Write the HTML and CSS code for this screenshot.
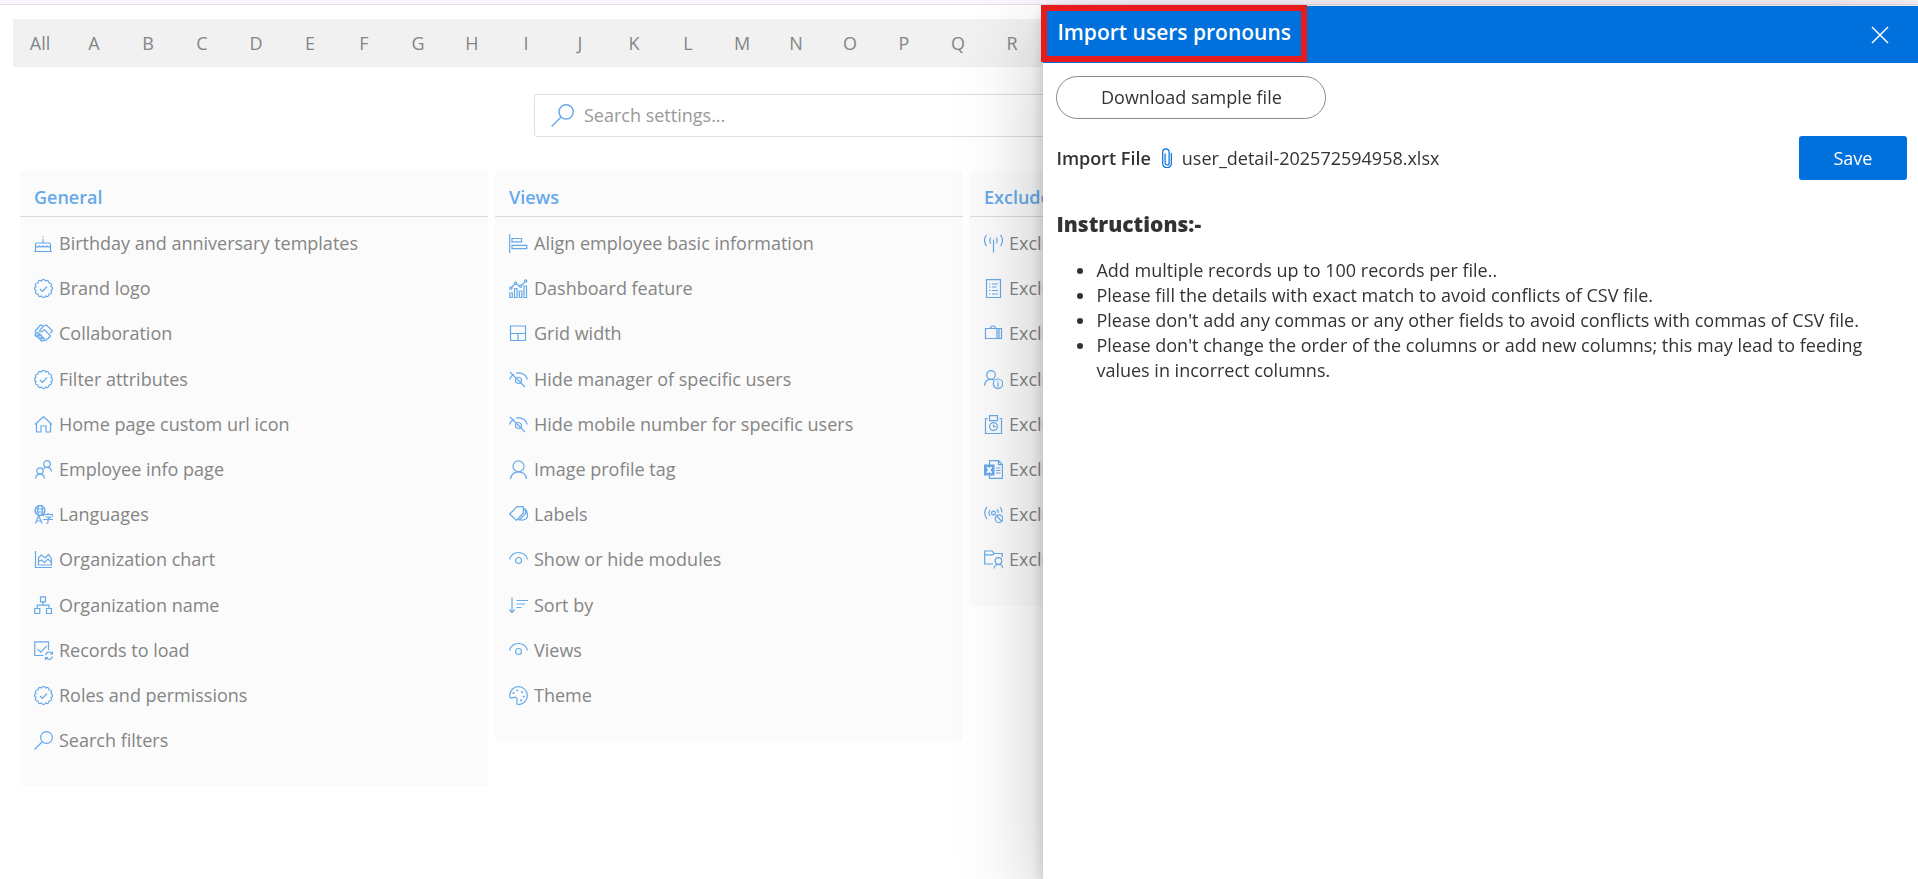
FILE: index.html
```html
<!DOCTYPE html>
<html lang="en">
<head>
<meta charset="utf-8">
<title>Settings</title>
<link rel="stylesheet" href="styles.css">
</head>
<body>
<svg class="sprite" aria-hidden="true">
  <symbol id="i-cake" viewBox="0 0 19 19"><path d="M0 17.5h18M1.5 17V10.5q0-1.5 1.5-1.5h12q1.500 0 1.500 1.500V17M1.500 12q1.900 2 3.800 0 1.900 2 3.700 0 1.900 2 3.800 0 1.900 2 3.700 0M9 9V5M9 3.500v-1"/></symbol>
  <symbol id="i-badge" viewBox="0 0 19 19"><path d="M7.480 1.970Q9.500-1.100 11.520 1.970 14.800.320 15.020 3.980 18.680 4.200 17.030 7.480 20.100 9.500 17.030 11.520 18.680 14.800 15.020 15.020 14.800 18.680 11.520 17.030 9.500 20.100 7.480 17.030 4.200 18.680 3.980 15.020.320 14.800 1.970 11.520-1.100 9.500 1.970 7.480.320 4.200 3.980 3.980 4.200.320 7.480 1.970ZM6 10l2.400 2.300L13 7.500"/></symbol>
  <symbol id="i-hands" viewBox="0 0 19 19"><path d="M.8 7.500 6.500 1l3 1.200L12.500 1l6 6-2 2.200M9.500 2.200 5.500 6.500q1 2.200 3.200.5l1.500-1.500 6.300 6.200q0 2-2 1.700 0 2-2 1.700 0 1.800-2 1.500L9.500 15.500M.8 7.500l2 3M2.200 9.500l1.800-1.300 1.500 1.500-3 3L1 11.300ZM5 12.200l1.600-1.500 1.500 1.500-2.700 2.700-1.500-1.500ZM7.500 14.700 9 13.300l1.400 1.300-2.500 2.800L6.500 16Z"/></symbol>
  <symbol id="i-home" viewBox="0 0 19 19"><path d="M1 9.500 9.500 1.500 18 9.500M2.500 8.500v8.500h4.500v-6h5v6h4.500V8.500"/></symbol>
  <symbol id="i-people" viewBox="0 0 19 19"><circle cx="13" cy="4" r="3.300"/><circle cx="6" cy="11" r="3.200"/><path d="M1.500 18.500q.5-4.300 4.500-4.300t4.500 4.300M9.500 9q1.200-1.700 3.500-1.700 4 0 4.500 4.200"/></symbol>
  <symbol id="i-lang" viewBox="0 0 19 19"><circle cx="6" cy="5.500" r="5"/><ellipse cx="6" cy="5.500" rx="2.300" ry="5"/><path d="M1 4h10M1 7h10M1.500 18.500 4.700 10.500l3.300 8M2.500 16h4.400M9.500 11.500V9.500h9v2M14 9.500V8M11.500 12h5L14 14v3.500q0 1-1.500.7M9 14.500h10"/></symbol>
  <symbol id="i-area" viewBox="0 0 19 19"><path d="M1.500 1v16.500H18M4.500 15V7.500l3-2.500 3.500 3 3.500-3.500L17.500 9v6ZM4.500 11.500l3-1.500 3 2.500 3.500-3.500 3.500 3.500"/></symbol>
  <symbol id="i-org" viewBox="0 0 19 19"><path d="M6.500.8h5v5h-5ZM.8 12.500h5v5h-5ZM12.500 12.500h5v5h-5ZM9 6v3.200M3.300 12.500V9.200h11.700v3.300"/></symbol>
  <symbol id="i-records" viewBox="0 0 19 19"><path d="M9.500 14.500H.8V.8h13.700V9M3.500 7.800l3.300 3.400 6-6.400M11.500 14q.8-3 3.500-3 2 0 3 1.800M18.500 10.500V13h-2.600M18.500 15.500q-.8 3-3.500 3-2 0-3-1.800M11.500 19v-2.500h2.600"/></symbol>
  <symbol id="i-search" viewBox="0 0 19 19"><circle cx="12.500" cy="6.500" r="5.900"/><path d="M8.300 10.800.5 18.500"/></symbol>
  <symbol id="i-align" viewBox="0 0 19 19"><path d="M.7 0v19M3 4.500h9.500v3.300H3ZM3 11.300h14.800v3.300H3Z"/></symbol>
  <symbol id="i-dash" viewBox="0 0 19 19"><path d="M.8 18.500v-4.500h2.500v4.500ZM5.500 18.500V9.500h2.500v9ZM10.300 18.500v-6.500h2.500v6.500ZM15 18.500V7h2.500v11.500ZM2.500 8.500l3.500-3.700M7.500 5l3 2M12.500 6.500l3.300-3.700"/><circle cx="1.800" cy="9.300" r="1.100"/><circle cx="6.600" cy="4.200" r="1.100"/><circle cx="11.500" cy="7.200" r="1.100"/><circle cx="16.700" cy="2" r="1.200"/></symbol>
  <symbol id="i-grid" viewBox="0 0 19 19"><path d="M1.500 2h15v14.500h-15ZM1.500 9.500h15M9 9.500v7"/></symbol>
  <symbol id="i-hide" viewBox="0 0 19 19"><path d="M.5 9.500q1.300-3.700 4.500-5.200M7 3.200q8.500-1.700 11.500 6.300M1 2l15 15"/><circle cx="9.500" cy="10.500" r="3"/></symbol>
  <symbol id="i-person" viewBox="0 0 19 19"><circle cx="9.500" cy="6.300" r="5.500"/><path d="M1.500 19q1-7.200 8-7.200t8 7.200"/></symbol>
  <symbol id="i-tags" viewBox="0 0 19 19"><path d="M.7 9 8 1.700h6.300V8L7.500 15.500ZM15.500 3.500q3 3 3 6.500 0 4.500-4.500 5-2.500.3-5-1M14.500 4l2 1.500v3l-6.500 6.800"/></symbol>
  <symbol id="i-eye" viewBox="0 0 19 19"><path d="M.5 9.500Q2.500 2.500 9.500 2.500t9 7"/><circle cx="9.500" cy="10.500" r="3"/></symbol>
  <symbol id="i-sort" viewBox="0 0 19 19"><path d="M3 1.500v15M.3 13.700 3 16.500l2.800-2.800M7.500 4.500h11.500M7.500 8h8.500M7.500 11.500h5"/></symbol>
  <symbol id="i-theme" viewBox="0 0 19 19"><path d="M9.500.7a8.900 8.900 0 1 1 0 17.800c-3-.3-1.500-2.500-1.300-4.500.2-2.500-2-3.500-4.200-2.300C2 12.800.7 12 .7 9.500A8.800 8.800 0 0 1 9.500.7Z"/><g class="dots"><circle cx="4.500" cy="7" r="1.100"/><circle cx="8.300" cy="4.500" r="1.100"/><circle cx="13" cy="6" r="1.100"/><circle cx="14.700" cy="10.500" r="1.100"/><circle cx="12" cy="14.300" r="1.100"/></g></symbol>
  <symbol id="i-antenna" viewBox="0 0 19 19"><path d="M9.500 5.500v13M6.800 3.500q-2 2.700 0 6M12.200 3.500q2 2.700 0 6M2.500 1q-4 5.500 0 11M16.500 1q4 5.500 0 11"/></symbol>
  <symbol id="i-list" viewBox="0 0 19 19"><path d="M2.500.7h14v18h-14ZM5 5h1.500M8 5h6M5 8h1.500M8 8h4.500M5 11.500h1.500M8 11.500h6M5 15h1.500M8 15h6"/></symbol>
  <symbol id="i-case" viewBox="0 0 19 19"><path d="M1.500 4.500h16v10h-16ZM13 4.500v10M15 4.500v10M6.500 4.500Q6.500 2 9 2t2.800 2.500"/></symbol>
  <symbol id="i-userinfo" viewBox="0 0 19 19"><circle cx="7" cy="5" r="4.300"/><path d="M.5 15.500Q1 9.300 7 9.300q1.800 0 3 .7M14 12.800v4M14 11v.9"/><circle cx="14" cy="13.700" r="4.700"/></symbol>
  <symbol id="i-clock" viewBox="0 0 19 19"><path d="M3.500 3.500h-2v15h16v-15h-2M5.500.7h8v5h-8Z"/><circle cx="9.500" cy="11.500" r="3.900"/><path d="M9.500 9.500v2.200h2"/></symbol>
  <symbol id="i-excel" viewBox="0 0 19 19"><path d="M5.500 5V.7h9l4 4v13.700h-13V15M14.500.7v4h4M12 8h4.500M12 10.500h4.500M12 13h4.500"/><path class="solid" d="M0 4.500h10.500v11H0Z"/><path class="cut" d="m3.200 7 4.200 6M7.400 7l-4.200 6"/></symbol>
  <symbol id="i-signaloff" viewBox="0 0 19 19"><path d="M3 2q-4.500 5.500 0 12M6 5q-2.200 3 0 6M13 4.500q1.500 1.500 1.200 3.500M16 2q2 2.500 2 5.500M12.500 11l5.500 5.500"/><circle cx="9.500" cy="8" r="1.900"/><circle cx="15" cy="13.700" r="3.800"/></symbol>
  <symbol id="i-folder" viewBox="0 0 19 19"><path d="M9 14H.7V1h7.500L10 3.500h8.300V7M.7 4.800h8L10 3.500M10 18.500q.5-4 4.500-4t4.500 4"/><circle cx="14.500" cy="11" r="3.300"/></symbol>
</svg>

<main class="page">
  <nav class="letters" aria-label="Filter by letter">
    <a href="#">All</a><a href="#">A</a><a href="#">B</a><a href="#">C</a><a href="#">D</a><a href="#">E</a><a href="#">F</a><a href="#">G</a><a href="#">H</a><a href="#">I</a><a href="#">J</a><a href="#">K</a><a href="#">L</a><a href="#">M</a><a href="#">N</a><a href="#">O</a><a href="#">P</a><a href="#">Q</a><a href="#">R</a>
  </nav>

  <label class="search">
    <svg class="icon icon-large"><use href="#i-search"/></svg>
    <input type="search" placeholder="Search settings..." aria-label="Search settings">
  </label>

  <div class="columns">
    <section class="card">
      <h2>General</h2>
      <ul>
        <li><a href="#"><svg class="icon"><use href="#i-cake"/></svg>Birthday and anniversary templates</a></li>
        <li><a href="#"><svg class="icon"><use href="#i-badge"/></svg>Brand logo</a></li>
        <li><a href="#"><svg class="icon"><use href="#i-hands"/></svg>Collaboration</a></li>
        <li><a href="#"><svg class="icon"><use href="#i-badge"/></svg>Filter attributes</a></li>
        <li><a href="#"><svg class="icon"><use href="#i-home"/></svg>Home page custom url icon</a></li>
        <li><a href="#"><svg class="icon"><use href="#i-people"/></svg>Employee info page</a></li>
        <li><a href="#"><svg class="icon"><use href="#i-lang"/></svg>Languages</a></li>
        <li><a href="#"><svg class="icon"><use href="#i-area"/></svg>Organization chart</a></li>
        <li><a href="#"><svg class="icon"><use href="#i-org"/></svg>Organization name</a></li>
        <li><a href="#"><svg class="icon"><use href="#i-records"/></svg>Records to load</a></li>
        <li><a href="#"><svg class="icon"><use href="#i-badge"/></svg>Roles and permissions</a></li>
        <li><a href="#"><svg class="icon"><use href="#i-search"/></svg>Search filters</a></li>
      </ul>
    </section>
    <section class="card">
      <h2>Views</h2>
      <ul>
        <li><a href="#"><svg class="icon"><use href="#i-align"/></svg>Align employee basic information</a></li>
        <li><a href="#"><svg class="icon"><use href="#i-dash"/></svg>Dashboard feature</a></li>
        <li><a href="#"><svg class="icon"><use href="#i-grid"/></svg>Grid width</a></li>
        <li><a href="#"><svg class="icon"><use href="#i-hide"/></svg>Hide manager of specific users</a></li>
        <li><a href="#"><svg class="icon"><use href="#i-hide"/></svg>Hide mobile number for specific users</a></li>
        <li><a href="#"><svg class="icon"><use href="#i-person"/></svg>Image profile tag</a></li>
        <li><a href="#"><svg class="icon"><use href="#i-tags"/></svg>Labels</a></li>
        <li><a href="#"><svg class="icon"><use href="#i-eye"/></svg>Show or hide modules</a></li>
        <li><a href="#"><svg class="icon"><use href="#i-sort"/></svg>Sort by</a></li>
        <li><a href="#"><svg class="icon"><use href="#i-eye"/></svg>Views</a></li>
        <li><a href="#"><svg class="icon"><use href="#i-theme"/></svg>Theme</a></li>
      </ul>
    </section>
    <section class="card">
      <h2>Exclude</h2>
      <ul>
        <li><a href="#"><svg class="icon"><use href="#i-antenna"/></svg>Exclude</a></li>
        <li><a href="#"><svg class="icon"><use href="#i-list"/></svg>Exclude</a></li>
        <li><a href="#"><svg class="icon"><use href="#i-case"/></svg>Exclude</a></li>
        <li><a href="#"><svg class="icon"><use href="#i-userinfo"/></svg>Exclude</a></li>
        <li><a href="#"><svg class="icon"><use href="#i-clock"/></svg>Exclude</a></li>
        <li><a href="#"><svg class="icon"><use href="#i-excel"/></svg>Exclude</a></li>
        <li><a href="#"><svg class="icon"><use href="#i-signaloff"/></svg>Exclude</a></li>
        <li><a href="#"><svg class="icon"><use href="#i-folder"/></svg>Exclude</a></li>
      </ul>
    </section>
  </div>
</main>

<aside class="panel" role="dialog" aria-labelledby="panel-title">
  <header class="panel-header">
    <h1 class="panel-title" id="panel-title">Import users pronouns</h1>
    <button class="close" type="button" aria-label="Close"><svg viewBox="0 0 18 18"><path d="m1 1 16 16M17 1 1 17"/></svg></button>
  </header>
  <div class="panel-body">
    <button class="download" type="button">Download sample file</button>
    <div class="import-row">
      <span class="import-label">Import File</span>
      <button class="file" type="button"><svg class="clip" viewBox="0 0 10 20"><path d="M9.300 5v10.500a4.300 4.300 0 0 1-8.600 0V4a3.200 3.200 0 0 1 6.400 0v11a2 2 0 0 1-4 0V5.500"/></svg>user_detail-202572594958.xlsx</button>
      <button class="save" type="button">Save</button>
    </div>
    <h2 class="instructions-title">Instructions:-</h2>
    <ul class="instructions">
      <li>Add multiple records up to 100 records per file..</li>
      <li>Please fill the details with exact match to avoid conflicts of CSV file.</li>
      <li>Please don't add any commas or any other fields to avoid conflicts with commas of CSV file.</li>
      <li>Please don't change the order of the columns or add new columns; this may lead to feeding values in incorrect columns.</li>
    </ul>
  </div>
</aside>
</body>
</html>
```
FILE: styles.css
```css
* { box-sizing: border-box; }

body {
  margin: 0;
  min-height: 100vh;
  overflow: hidden;
  border-top: 4px solid #fbf5fe;
  background: #fff;
  color: #333;
  font: 18px/25px "Open Sans", "Noto Sans", sans-serif;
}

h1, h2, ul { margin: 0; padding: 0; }
a { color: inherit; text-decoration: none; }
button, input { font: inherit; color: inherit; }
.sprite { display: none; }

.page {
  border-top: 1px solid #e8dfec;
  padding: 14px 13px 0;
  color: #858585;
}

.letters {
  display: flex;
  align-items: center;
  height: 48px;
  background: #f1f1f1;
}
.letters a { width: 54px; text-align: center; }

.search {
  display: flex;
  align-items: center;
  gap: 10px;
  width: 850px;
  max-width: 100%;
  height: 43px;
  margin: 27px auto 34px;
  padding: 0 16px;
  border: 1px solid #dedede;
  border-radius: 3px;
}
.search input {
  flex: 1;
  padding: 0;
  border: 0;
  outline: 0;
  background: none;
}
.search input::placeholder { color: #999; opacity: 1; }

.icon {
  flex: none;
  width: 19px;
  height: 19px;
  overflow: visible;
  fill: none;
  stroke: #66a9eb;
  stroke-width: 1.2;
}
.icon-large { width: 23px; height: 23px; }
.dots, .solid { fill: #66a9eb; stroke: none; }
.cut { stroke: #fff; stroke-width: 2; }

.columns {
  display: grid;
  grid-template-columns: repeat(4, 1fr);
  align-items: start;
  gap: 7px;
  margin: 0 -8px 0 7px;
}
.card { padding-bottom: 23px; background: #fbfbfb; }
.card h2 {
  height: 46px;
  margin-bottom: 4px;
  padding: 14px 14px 0;
  border-bottom: 1px solid #dadada;
  color: #66a9eb;
  font-size: 18px;
  font-weight: 600;
}
.card ul { list-style: none; }
.card a {
  display: flex;
  align-items: center;
  gap: 6px;
  padding: 10px 14px;
  line-height: 1.4;
}

/* Side panel that slides over the settings page */
.panel {
  position: fixed;
  inset: 6px 0 0 auto;
  width: 45.6%;
  background: #fff;
  box-shadow: 0 26px 80px rgba(0, 0, 0, .24), 0 5px 14px rgba(0, 0, 0, .18);
}
.panel-header {
  display: flex;
  align-items: center;
  justify-content: space-between;
  height: 57px;
  padding-right: 29px;
  background: #0070dc;
  color: #fff;
}
.panel-title {
  align-self: stretch;
  margin: -1px 0 1px -2px;
  padding: 9px 10px;
  border: 6px solid #e61b1b;
  font-size: 21px;
  font-weight: 600;
}
.close {
  display: flex;
  padding: 0;
  border: 0;
  background: none;
}
.close svg {
  width: 18px;
  height: 18px;
  fill: none;
  stroke: #fff;
  stroke-width: 1.5;
}

.panel-body { padding: 13px 11px 0 13px; }
.download {
  width: 270px;
  height: 43px;
  border: 1px solid #888;
  border-radius: 22px;
  background: #fff;
}
.import-row {
  display: flex;
  align-items: center;
  margin-top: 17px;
}
.import-label { font-weight: 600; }
.file {
  display: flex;
  align-items: center;
  gap: 10px;
  margin-left: 11px;
  padding: 0;
  border: 0;
  background: none;
}
.clip {
  width: 10px;
  height: 20px;
  fill: none;
  stroke: #0070dc;
  stroke-width: 1.2;
}
.save {
  width: 108px;
  height: 44px;
  margin-left: auto;
  border: 0;
  border-radius: 3px;
  background: #0070dc;
  color: #fff;
}
.instructions-title {
  margin-top: 30px;
  font-size: 21px;
  line-height: 28px;
  font-weight: 800;
}
.instructions {
  margin-top: 20px;
  padding-left: 40px;
}
```
